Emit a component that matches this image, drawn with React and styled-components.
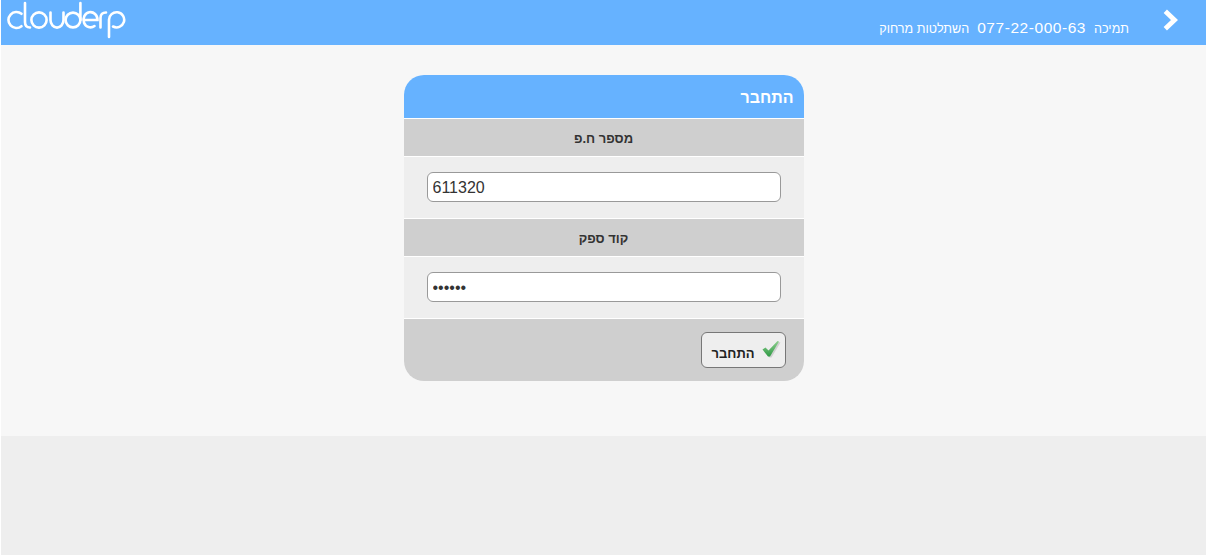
import React from "react";
import styled, { createGlobalStyle } from "styled-components";

const Global = createGlobalStyle`
  html, body { margin: 0; padding: 0; height: 100%; background: #fff; }
  #root { height: 100%; }
  * { box-sizing: border-box; }
`;
const Page = styled.div`
  height: 555px; padding: 0 1px; display: flex; flex-direction: column;
  font-family: "Liberation Sans", Arial, sans-serif; direction: rtl; color: #333;
`;
const Header = styled.header`
  height: 45px; background: #66b2ff; display: flex; align-items: flex-start;
  justify-content: space-between; flex: none;
`;
const Back = styled.svg`
  width: 17px; height: 22px; margin: 9px 27px 0 0; flex: none;
`;
const Contact = styled.div`
  display: flex; gap: 8px; align-items: baseline; color: #fff; font-size: 12.6px;
  margin: 17px 33px 0 0; flex: none; line-height: 22px;
`;
const Phone = styled.span`
  font-size: 15.5px; letter-spacing: 0.55px; direction: ltr;
`;
const HeaderStart = styled.div`display: flex; align-items: flex-start;`;
const Logo = styled.svg`
  width: 125px; height: 40px; flex: none; display: block;
`;
const Main = styled.main`
  height: 391px; flex: none; background: #f7f7f7; padding-top: 30px;
  display: flex; justify-content: center;
`;
const Card = styled.section`
  width: 400px; height: 306px; border-radius: 20px; overflow: hidden;
  display: flex; flex-direction: column; background: #fff;
`;
const Title = styled.h1`
  margin: 0; height: 43px; background: #66b2ff; color: #fff; font-size: 16px; font-weight: bold;
  padding: 13px 10px 0 0; line-height: 19px;
`;
const LabelBar = styled.label`
  display: block; height: 37px; margin-top: 1px; background: #cfcfcf; text-align: center;
  font-size: 13px; font-weight: bold; line-height: 39px; color: #333;
`;
const Field = styled.div`
  height: 61px; margin-top: 1px; background: #eee; padding: 15px 23px 0;
`;
const Input = styled.input`
  display: block; width: 354px; height: 30px; border: 1px solid #999; border-radius: 6px;
  background: #fff; color: #333; padding: 1px 5px 0; direction: ltr; text-align: left;
  font: 16px "Liberation Sans", Arial, sans-serif; outline: none;
`;
const Footer = styled.div`
  flex: 1; margin-top: 1px; background: #cfcfcf; padding: 13px 18px 0 0;
`;
const Button = styled.button`
  width: 85px; height: 36px; border: 1px solid #777; border-radius: 6px; background: #eee;
  display: flex; align-items: center; padding: 0 4px 0 0; gap: 6px; direction: rtl;
  font: bold 13px "Liberation Sans", Arial, sans-serif; color: #222;
`;
const ButtonLabel = styled.span`margin-top: 6px;`;
const Check = styled.svg`width: 20px; height: 20px; flex: none; margin-top: -2px;`;
const Bottom = styled.footer`flex: 1; background: #eee;`;

export default function App() {
  return (
    <Page>
      <Global />
      <Header>
        <HeaderStart>
          <Back viewBox="0 0 17 22" aria-label="back">
            <path d="M3.3 2.3 L12.5 11 L3.3 19.7" fill="none" stroke="#fff" strokeWidth="4.8" />
          </Back>
          <Contact>
            <span>תמיכה</span>
            <Phone>077-22-000-63</Phone>
            <span>השתלטות מרחוק</span>
          </Contact>
        </HeaderStart>
        <Logo viewBox="1 0 125 40" aria-label="clouderp">
          <g fill="none" stroke="#fff" strokeWidth="2.6" strokeLinecap="round">
            <path d="M21.5 13.8 A8 8 0 1 0 21.5 26.2" />
            <path d="M25 3 V22 Q25 27.5 30 27.5" />
            <circle cx="39" cy="20" r="7.6" />
            <path d="M50.5 12.5 V20 A6.5 7.6 0 0 0 63.5 20 V12.5" />
            <circle cx="73" cy="20" r="7.4" />
            <path d="M80.4 3 V20" />
            <path d="M83.5 20 H97.5 A7 7.6 0 1 0 94.5 26" />
            <path d="M100.5 27.5 V18 Q100.5 12.5 106 12.5" />
            <path d="M109 37 V20 A7.6 7.6 0 1 1 113 26.5" />
          </g>
        </Logo>
      </Header>
      <Main>
        <Card>
          <Title>התחבר</Title>
          <LabelBar htmlFor="vat">מספר ח.פ</LabelBar>
          <Field><Input id="vat" defaultValue="611320" /></Field>
          <LabelBar htmlFor="code">קוד ספק</LabelBar>
          <Field><Input id="code" type="password" defaultValue="123456" /></Field>
          <Footer>
            <Button type="button">
              <Check viewBox="0 0 20 20">
                <defs>
                  <linearGradient id="chk" x1="0" y1="0" x2="0" y2="1">
                    <stop offset="0" stopColor="#8fcf8f" />
                    <stop offset="1" stopColor="#2f9a45" />
                  </linearGradient>
                </defs>
                <path d="M3 12.5 L6 10.5 L9 13 L17.5 3 L19.5 3.5 L10.5 18.5 L8.5 18.5 Z" fill="#bdbdbd" opacity=".6" />
                <path d="M1.5 10.5 L4.5 8.5 L7.5 11.5 L16.5 2 L18 2.5 L9 17.5 L7 17.5 Z" fill="url(#chk)" />
              </Check>
              <ButtonLabel>התחבר</ButtonLabel>
            </Button>
          </Footer>
        </Card>
      </Main>
      <Bottom />
    </Page>
  );
}
